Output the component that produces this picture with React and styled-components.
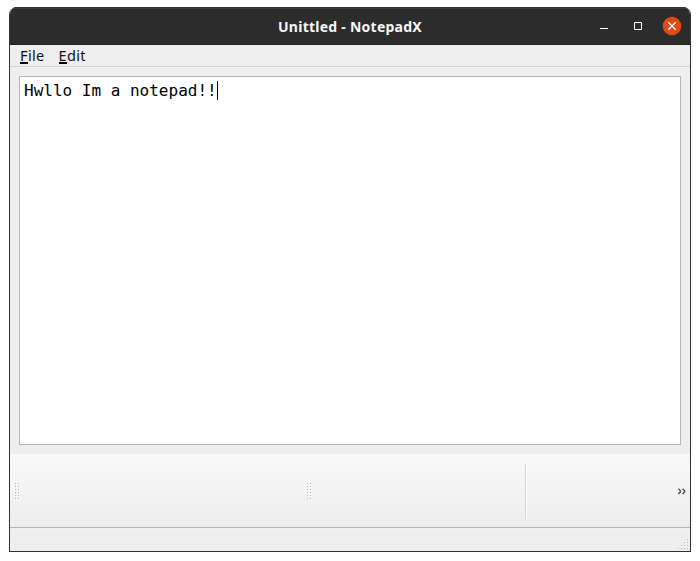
import React from "react";
import styled, { createGlobalStyle } from "styled-components";

const GlobalStyle = createGlobalStyle`
  *, *::before, *::after { box-sizing: border-box; }
  body { margin: 0; background: #fff; }
`;

const Desktop = styled.main`
  width: 700px;
  height: 561px;
  padding: 7px 9px 9px;
  background: #fff;
`;

const Window = styled.section`
  display: flex;
  flex-direction: column;
  width: 682px;
  height: 545px;
  border: 1px solid #303030;
  border-top: 0;
  border-radius: 8px 8px 0 0;
  background: #eeeeee;
  overflow: hidden;
  font-family: "Noto Sans", sans-serif;
`;

const TitleBar = styled.header`
  display: grid;
  grid-template-columns: 1fr auto 1fr;
  align-items: center;
  height: 38px;
  flex: none;
  background: #2c2c2c;
  border-top: 1px solid #343434;
  border-bottom: 1px solid #252525;
  box-shadow: inset 0 1px #3b3b3b;
`;

const Title = styled.h1`
  grid-column: 2;
  margin: 0;
  padding-top: 2px;
  font-size: 14px;
  line-height: 20px;
  font-weight: 700;
  letter-spacing: 0.25px;
  color: #f7f7f7;
  white-space: nowrap;
`;

const Controls = styled.div`
  display: flex;
  justify-content: flex-end;
  gap: 14px;
  padding-right: 8px;
`;

const ControlButton = styled.button`
  width: 20px;
  height: 20px;
  padding: 0;
  border: 0;
  background: none;
  svg { display: block; }
`;

const MenuBar = styled.nav`
  display: flex;
  gap: 14px;
  height: 22px;
  flex: none;
  padding-left: 10px;
  border-bottom: 1px solid #d3d3d3;
`;

const MenuItem = styled.span`
  width: ${(p) => p.$width}px;
  font-size: 14.5px;
  line-height: 21px;
  letter-spacing: 0.35px;
  color: #111;
  white-space: nowrap;
`;

const Mnemonic = styled.span`
  display: inline-block;
  height: 19px;
  line-height: 21px;
  vertical-align: top;
  border-bottom: 2px solid #000;
`;

const Workspace = styled.div`
  height: 387px;
  flex: none;
  padding: 9px;
`;

const Editor = styled.div`
  display: flex;
  height: 369px;
  padding: 4px;
  border: 1px solid #b6b6b6;
  background: #fff;
  font: 16px/19px "DejaVu Sans Mono", monospace;
  color: #000;
  white-space: pre;
`;

const Caret = styled.span`
  width: 1px;
  height: 19px;
  background: #000;
`;

const ToolBar = styled.div`
  display: flex;
  align-items: center;
  height: 74px;
  flex: none;
  padding: 2px 4px 0 5px;
  border-bottom: 1px solid #b6b6b6;
  background: linear-gradient(#f9f9f9, #ededed);
`;

const ToolArea = styled.div`
  width: ${(p) => p.$width}px;
`;

const Separator = styled.div`
  width: 2px;
  height: 55px;
  border-left: 1px solid #d5d5d5;
  background: #fdfdfd;
`;

const Overflow = styled.button`
  display: block;
  margin-left: auto;
  padding: 0;
  border: 0;
  background: none;
  svg { display: block; }
`;

const StatusBar = styled.footer`
  display: flex;
  justify-content: flex-end;
  align-items: flex-end;
  flex: 1;
  padding: 0 2px 2px 0;
  border-top: 1px solid #f2f2f2;
`;

const GripSvg = styled.svg`
  display: block;
  flex: none;
`;

function Grip() {
  return (
    <GripSvg width="5" height="17" shapeRendering="crispEdges">
      {[0, 3, 6, 9, 12, 15].flatMap((y) =>
        [0, 3].map((x) => (
          <g key={`${x}-${y}`}>
            <rect x={x + 1} y={y + 1} width="1" height="1" fill="#fafafa" />
            <rect x={x} y={y} width="1" height="1" fill="#b8b8b8" />
          </g>
        ))
      )}
    </GripSvg>
  );
}

function SizeGrip() {
  return (
    <GripSvg width="10" height="10" shapeRendering="crispEdges" fill="#b8b8b8">
      {[0, 1, 2, 3].flatMap((row) =>
        Array.from({ length: row + 1 }, (_, i) => (
          <rect key={`${row}-${i}`} x={9 - i * 3} y={row * 3} width="1" height="1" />
        ))
      )}
    </GripSvg>
  );
}

export default function App() {
  return (
    <>
      <GlobalStyle />
      <Desktop>
        <Window>
          <TitleBar>
            <Title>Unittled - NotepadX</Title>
            <Controls>
              <ControlButton aria-label="Minimize">
                <svg width="20" height="20"><path d="M6 12.5h8" stroke="#fff" /></svg>
              </ControlButton>
              <ControlButton aria-label="Maximize">
                <svg width="20" height="20"><path d="M6.5 6.5h7v7h-7z" fill="none" stroke="#fff" /></svg>
              </ControlButton>
              <ControlButton aria-label="Close">
                <svg width="20" height="20">
                  <circle cx="10" cy="10" r="9.3" fill="#e04a16" />
                  <path d="M6.3 6.3l7.4 7.4M13.7 6.3l-7.4 7.4" stroke="#fff" strokeWidth="1.3" />
                </svg>
              </ControlButton>
            </Controls>
          </TitleBar>
          <MenuBar>
            <MenuItem $width={24.5}><Mnemonic>F</Mnemonic>ile</MenuItem>
            <MenuItem $width={28}><Mnemonic>E</Mnemonic>dit</MenuItem>
          </MenuBar>
          <Workspace>
            <Editor>Hwllo Im a notepad!!<Caret /></Editor>
          </Workspace>
          <ToolBar>
            <Grip />
            <ToolArea $width={287} />
            <Grip />
            <ToolArea $width={213} />
            <Separator />
            <Overflow aria-label="More tools">
              <svg width="8" height="7" fill="none" stroke="#505050" strokeWidth="1.4">
                <path d="M.4.7l2 2v1.2l-2 2M4.6.7l2 2v1.2l-2 2" />
              </svg>
            </Overflow>
          </ToolBar>
          <StatusBar><SizeGrip /></StatusBar>
        </Window>
      </Desktop>
    </>
  );
}
